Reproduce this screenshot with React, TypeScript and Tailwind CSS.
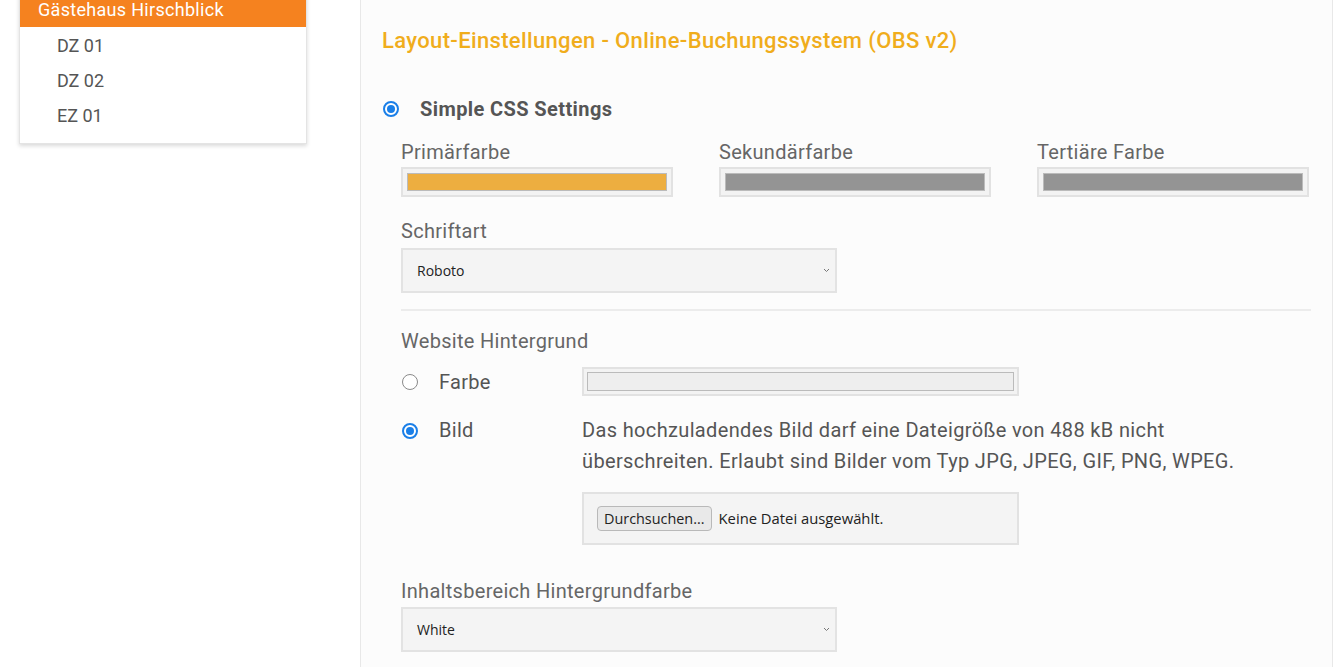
import React from "react";

const rooms = ["DZ 01", "DZ 02", "EZ 01"];

const Radio = ({ checked }: { checked?: boolean }) =>
  checked ? (
    <span className="flex h-[16px] w-[16px] items-center justify-center rounded-full border-[2px] border-[#1a7fe8] bg-white">
      <span className="h-[8px] w-[8px] rounded-full bg-[#1a7fe8]" />
    </span>
  ) : (
    <span className="block h-[16px] w-[16px] rounded-full border border-[#8a8a8a] bg-white" />
  );

const ColorField = ({ label, color }: { label: string; color: string }) => (
  <div className="w-[272px]">
    <div className="text-[20px] leading-[22px] tracking-[0.3px] text-[#666]">{label}</div>
    <div className="mt-[4px] h-[30px] border-[2px] border-[#e2e2e2] bg-[#f3f3f3] p-[4px]">
      <div className="h-full w-full border border-[#bbb]" style={{ backgroundColor: color }} />
    </div>
  </div>
);

const SelectBox = ({ value }: { value: string }) => (
  <div className="flex h-[45px] w-[436px] items-center justify-between border-[2px] border-[#e3e3e3] bg-[#f4f4f4] pl-[14px] pr-[5px]">
    <span className="font-['Open_Sans'] text-[14px] font-medium text-[#222]">{value}</span>
    <svg width="7" height="5" viewBox="0 0 7 5" className="text-[#777]">
      <path d="M1 1l2.5 2.5L6 1" stroke="currentColor" strokeWidth="1" fill="none" />
    </svg>
  </div>
);

export default function App() {
  return (
    <div className="flex min-h-[667px] bg-white font-['Roboto',sans-serif]">
      <aside className="w-[360px] shrink-0">
        <div className="ml-[19px] -mt-[12px] w-[288px] border border-[#e4e4e4] bg-white shadow-[0_2px_4px_rgba(0,0,0,0.15)]">
          <div className="h-[38px] bg-[#f5821f] pl-[18px] pt-[10px] text-[18px] leading-[22px] tracking-[0.3px] text-white">
            Gästehaus Hirschblick
          </div>
          <ul className="pb-[7px] pt-[4px]">
            {rooms.map((r) => (
              <li key={r} className="h-[35px] pl-[37px] pt-[4px] text-[18px] leading-[22px] text-[#555]">
                {r}
              </li>
            ))}
          </ul>
        </div>
      </aside>

      <main className="w-[973px] border-x border-[#e8e8e8] bg-[#fcfcfc] pl-[21px] pt-[28px]">
        <h1 className="text-[22px] font-medium leading-[26px] tracking-[0.35px] text-[#f0ad1c]">
          Layout-Einstellungen - Online-Buchungssystem (OBS v2)
        </h1>

        <div className="mt-[43px] flex items-center">
          <span className="ml-[1px]">
            <Radio checked />
          </span>
          <span className="ml-[21px] text-[20px] font-bold leading-[24px] tracking-[0.4px] text-[#555]">
            Simple CSS Settings
          </span>
        </div>

        <div className="pl-[19px]">
          <div className="mt-[20px] flex gap-[46px]">
            <ColorField label="Primärfarbe" color="#edae40" />
            <ColorField label="Sekundärfarbe" color="#949494" />
            <ColorField label="Tertiäre Farbe" color="#949494" />
          </div>

          <div className="mt-[23px] text-[20px] leading-[22px] tracking-[0.3px] text-[#666]">Schriftart</div>
          <div className="mt-[6px]">
            <SelectBox value="Roboto" />
          </div>

          <div className="mt-[16px] h-[2px] w-[910px] bg-[#ececec]" />

          <div className="mt-[19px] text-[20px] leading-[22px] tracking-[0.3px] text-[#666]">Website Hintergrund</div>

          <div className="mt-[15px] flex items-center">
            <span className="w-[38px] pl-[1px]">
              <Radio />
            </span>
            <span className="w-[143px] text-[20px] leading-[22px] tracking-[0.3px] text-[#555]">Farbe</span>
            <div className="h-[29px] w-[437px] border-[2px] border-[#e2e2e2] bg-[#f3f3f3] p-[3px]">
              <div className="h-full w-full border border-[#bbb] bg-[#eeeeee]" />
            </div>
          </div>

          <div className="mt-[19px] flex items-start">
            <span className="w-[38px] pl-[1px] pt-[8px]">
              <Radio checked />
            </span>
            <span className="w-[143px] pt-[4px] text-[20px] leading-[22px] tracking-[0.3px] text-[#555]">Bild</span>
            <div>
              <p className="text-[20px] leading-[31px] tracking-[0.35px] text-[#555]">
                Das hochzuladendes Bild darf eine Dateigröße von 488 kB nicht
                <br />
                überschreiten. Erlaubt sind Bilder vom Typ JPG, JPEG, GIF, PNG, WPEG.
              </p>
              <div className="mt-[15px] flex h-[53px] w-[437px] items-center border-[2px] border-[#e2e2e2] bg-[#f4f4f4] pl-[13px]">
                <span className="flex h-[25px] items-center rounded-[4px] border border-[#b9b9b9] bg-[#e9e9e9] px-[6px] font-['Open_Sans'] text-[14.4px] text-[#222]">
                  Durchsuchen...
                </span>
                <span className="ml-[7px] font-['Open_Sans'] text-[14.8px] text-[#222]">Keine Datei ausgewählt.</span>
              </div>
            </div>
          </div>

          <div className="mt-[35px] text-[20px] leading-[22px] tracking-[0.3px] text-[#666]">
            Inhaltsbereich Hintergrundfarbe
          </div>
          <div className="mt-[5px]">
            <SelectBox value="White" />
          </div>
        </div>
      </main>
    </div>
  );
}
